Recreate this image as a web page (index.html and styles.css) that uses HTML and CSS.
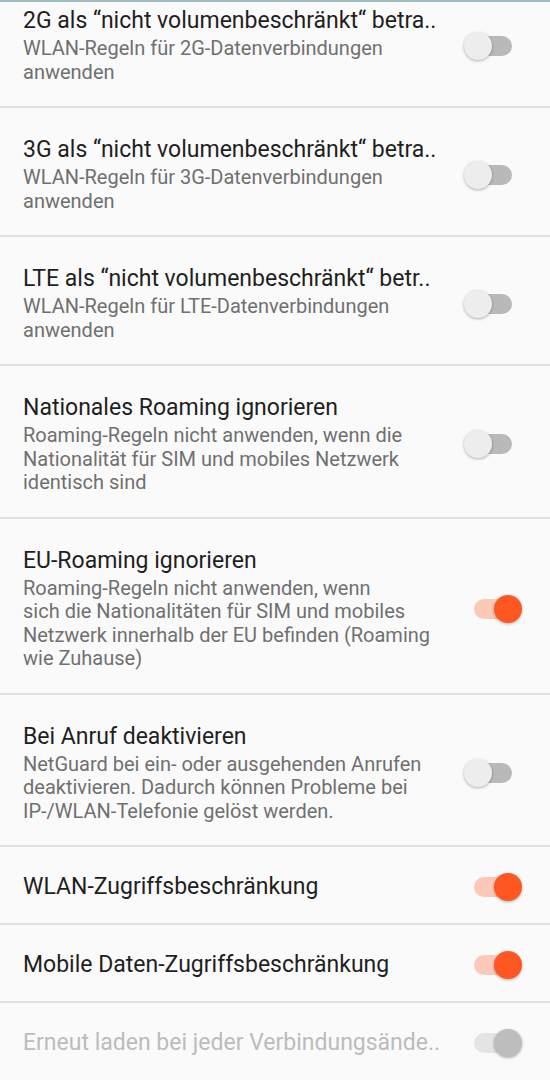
FILE: index.html
```html
<!DOCTYPE html>
<html lang="de">
<head>
  <meta charset="UTF-8">
  <meta name="viewport" content="width=device-width, initial-scale=1.0">
  <title>Einstellungen</title>
  <link rel="stylesheet" href="styles.css">
</head>
<body>
  <div class="topline"></div>
  <ul class="prefs">
    <li class="pref pref-first">
      <div class="text">
        <p class="title">2G als “nicht volumenbeschränkt“ betra..</p>
        <p class="summary">WLAN-Regeln für 2G-Datenverbindungen<br>anwenden</p>
      </div>
      <span class="switch"><span class="track"></span><span class="thumb"></span></span>
    </li>
    <li class="pref">
      <div class="text">
        <p class="title">3G als “nicht volumenbeschränkt“ betra..</p>
        <p class="summary">WLAN-Regeln für 3G-Datenverbindungen<br>anwenden</p>
      </div>
      <span class="switch"><span class="track"></span><span class="thumb"></span></span>
    </li>
    <li class="pref">
      <div class="text">
        <p class="title">LTE als “nicht volumenbeschränkt“ betr..</p>
        <p class="summary">WLAN-Regeln für LTE-Datenverbindungen<br>anwenden</p>
      </div>
      <span class="switch"><span class="track"></span><span class="thumb"></span></span>
    </li>
    <li class="pref">
      <div class="text">
        <p class="title">Nationales Roaming ignorieren</p>
        <p class="summary">Roaming-Regeln nicht anwenden, wenn die<br>Nationalität für SIM und mobiles Netzwerk<br>identisch sind</p>
      </div>
      <span class="switch"><span class="track"></span><span class="thumb"></span></span>
    </li>
    <li class="pref">
      <div class="text">
        <p class="title">EU-Roaming ignorieren</p>
        <p class="summary">Roaming-Regeln nicht anwenden, wenn<br>sich die Nationalitäten für SIM und mobiles<br>Netzwerk innerhalb der EU befinden (Roaming<br>wie Zuhause)</p>
      </div>
      <span class="switch on"><span class="track"></span><span class="thumb"></span></span>
    </li>
    <li class="pref">
      <div class="text">
        <p class="title">Bei Anruf deaktivieren</p>
        <p class="summary">NetGuard bei ein- oder ausgehenden Anrufen<br>deaktivieren. Dadurch können Probleme bei<br>IP-/WLAN-Telefonie gelöst werden.</p>
      </div>
      <span class="switch"><span class="track"></span><span class="thumb"></span></span>
    </li>
    <li class="pref pref-single">
      <div class="text">
        <p class="title">WLAN-Zugriffsbeschränkung</p>
      </div>
      <span class="switch on"><span class="track"></span><span class="thumb"></span></span>
    </li>
    <li class="pref pref-single">
      <div class="text">
        <p class="title">Mobile Daten-Zugriffsbeschränkung</p>
      </div>
      <span class="switch on"><span class="track"></span><span class="thumb"></span></span>
    </li>
    <li class="pref pref-single disabled">
      <div class="text">
        <p class="title">Erneut laden bei jeder Verbindungsände..</p>
      </div>
      <span class="switch on"><span class="track"></span><span class="thumb"></span></span>
    </li>
  </ul>
</body>
</html>
```

FILE: styles.css
```css
body {
  margin: 0;
  background: #fafafa;
  font-family: Roboto, "Noto Sans", sans-serif;
  overflow: hidden;
}

.topline {
  height: 2px;
  background: #9dbec1;
}

.prefs {
  list-style: none;
  margin: 0;
  padding: 0;
}

.pref {
  display: flex;
  align-items: center;
  padding: 28px 28px 22px 23px;
  border-bottom: 2px solid #e0e0e0;
}

.pref-first {
  padding-top: 5px;
}

.pref-single {
  padding: 26px 28px 22px 23px;
}

.pref:last-child {
  border-bottom: none;
}

.text {
  flex: 1;
  min-width: 0;
}

.title {
  margin: 0;
  font-size: 23px;
  line-height: 28px;
  color: #1f1f1f;
  white-space: nowrap;
}

.summary {
  margin: 2px 0 0;
  font-size: 20px;
  line-height: 23.5px;
  color: #707070;
  white-space: nowrap;
}

.disabled .title {
  color: #bcbcbc;
}

.switch {
  position: relative;
  width: 58px;
  height: 28px;
  flex: none;
}

.track {
  position: absolute;
  left: 10px;
  right: 10px;
  top: 4px;
  height: 20px;
  border-radius: 10px;
  background: #b9b9b9;
}

.thumb {
  position: absolute;
  left: 0;
  top: 0;
  width: 28px;
  height: 28px;
  border-radius: 50%;
  background: #ededed;
  box-shadow: 0 1px 3px rgba(0, 0, 0, 0.3);
}

.switch.on .track {
  background: #fcc8b7;
}

.switch.on .thumb {
  left: auto;
  right: 0;
  background: #ff5722;
}

.disabled .switch.on .track {
  background: #e4e4e4;
}

.disabled .switch.on .thumb {
  background: #bdbdbd;
}
```
